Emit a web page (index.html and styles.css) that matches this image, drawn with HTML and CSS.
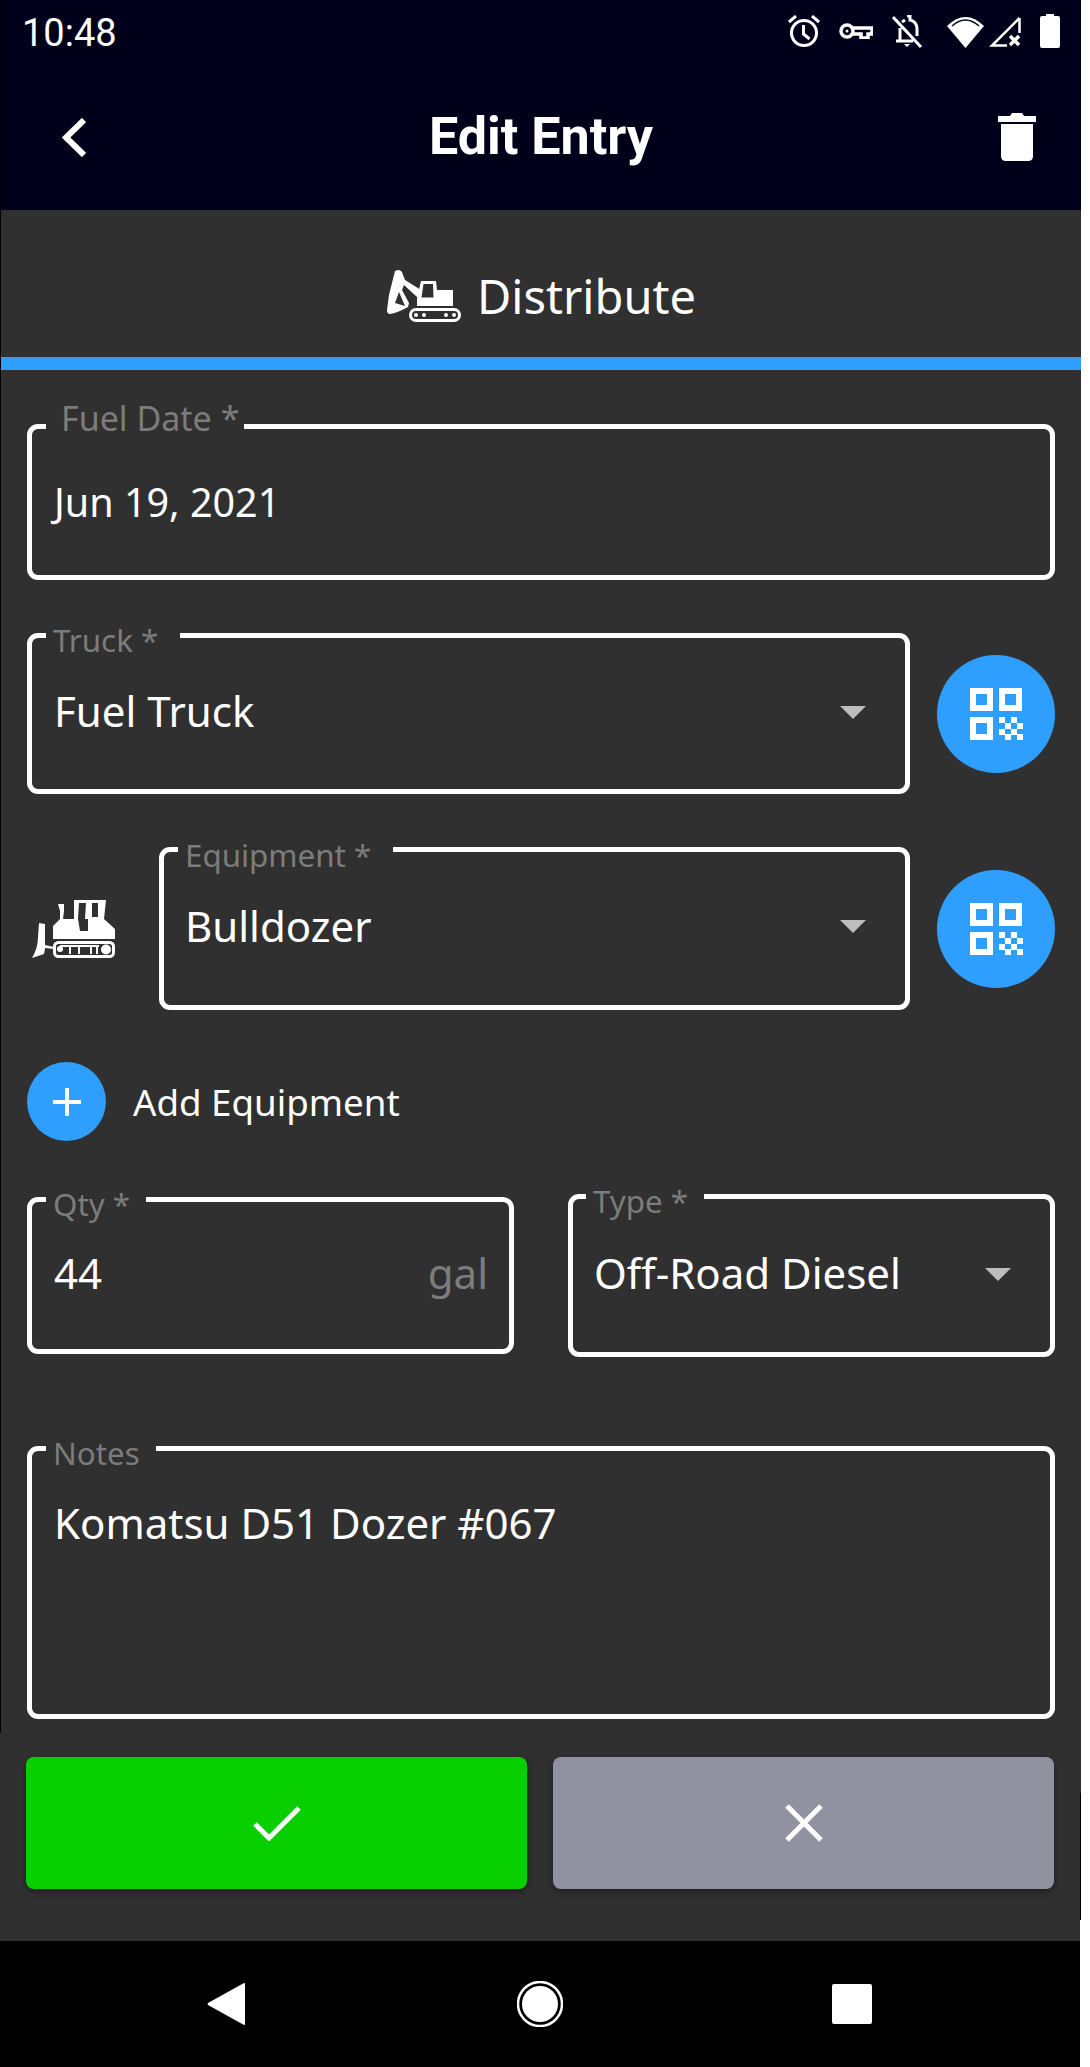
FILE: index.html
```html
<!DOCTYPE html>
<html lang="en">
<head>
<meta charset="utf-8">
<title>Edit Entry</title>
<link rel="stylesheet" href="styles.css">
</head>
<body>
<div class="upper">
  <header class="topbar">
    <div class="status">
      <span class="time">10:48</span>
      <div class="status-icons">
        <svg class="si" width="32" height="32" viewBox="0 0 32 32" fill="none" stroke="#fff" stroke-width="3"><circle cx="16" cy="18" r="12.500"/><path d="M15.500 10v9l6 5M1 7l7-6M31 7l-7-6"/></svg>
        <svg class="si" width="34" height="16" viewBox="0 0 34 16" fill="none" stroke="#fff" stroke-width="3.500"><circle cx="8" cy="8" r="6"/><circle cx="8" cy="8" r="1.500" fill="#fff" stroke="none"/><path d="M14 5h19v6h-4v4h-7v-4h-8"/></svg>
        <svg class="si" width="31" height="33" viewBox="0 0 31 33" fill="none" stroke="#fff" stroke-width="3"><path d="M4 26h17M8 26V13M25 21v-8a9 9 0 0 0-7-8V1h-3M13 5l-3 2M1 2l28 30"/><path d="M12 29h6l-3 3z" fill="#fff" stroke="none"/></svg>
        <svg class="si si-wifi" width="37" height="33" viewBox="0 0 37 33"><path d="M18.500 33 0 11Q18.500-7 37 11Z" fill="#fff"/><path d="M5 11Q18.500-1 32 11" fill="none" stroke="#00001a" stroke-width="1.500"/></svg>
        <svg class="si si-signal" width="32" height="32" viewBox="0 0 32 32" fill="none" stroke="#fff" stroke-width="2.500"><path d="M30.500 3v15M30.500 3 3 30.500h15"/><path d="M21 21l9 9M30 21l-9 9" stroke-width="3.500"/></svg>
        <svg class="si" width="20" height="34" viewBox="0 0 20 34"><path d="M6 2V0h8v2h4q2 0 2 2v28q0 2-2 2H2q-2 0-2-2V4q0-2 2-2z" fill="#fff"/></svg>
      </div>
    </div>
    <div class="titlebar">
      <svg class="back" width="24" height="39" viewBox="0 0 24 39" fill="none" stroke="#fff" stroke-width="6"><path d="M22 2 4 19.500 22 37"/></svg>
      <h1 class="title">Edit Entry</h1>
      <svg class="trash" width="38" height="48" viewBox="0 0 38 48"><path d="M0 3h12l2-3h10l2 3h12v6H0zM3 11h32v32q0 5-5 5H8q-5 0-5-5z" fill="#fff"/></svg>
    </div>
  </header>

  <div class="tab">
    <svg class="excavator" width="74" height="52" viewBox="0 0 74 52" fill="#fff">
      <path fill-rule="evenodd" d="M8 1l3-1q4 0 5 5l2 5 16 10-4 7-13-12-2 5 7 13-1 4Q10 43 3 44q-3 0-3-4l2-15zM12 22 8 33l10 3z"/>
      <path d="M34 11h15l1 9h16v16H30v-8z"/>
      <path d="M36.500 14H46l.5 13.500H34.500z" fill="#303030"/>
      <rect x="23.500" y="39.500" width="49" height="11" rx="5.500" fill="none" stroke="#fff" stroke-width="3"/>
      <circle cx="29" cy="45" r="2"/><circle cx="37" cy="45" r="2"/><circle cx="59" cy="45" r="2"/><circle cx="67" cy="45" r="2"/>
    </svg>
    <span class="tab-label">Distribute</span>
  </div>

  <form class="form">
    <div class="field field-date">
      <span class="legend legend-date">Fuel Date *</span>
      <span class="value value-date">Jun 19, 2021</span>
    </div>

    <div class="row row-truck">
      <div class="field field-select">
        <span class="legend legend-truck">Truck *</span>
        <span class="value">Fuel Truck</span>
        <span class="caret"></span>
      </div>
      <button class="qr" type="button" aria-label="Scan">
        <svg width="53" height="52" viewBox="0 0 53 52"><use href="#qr-code"/></svg>
      </button>
    </div>

    <div class="row row-equip">
      <svg class="dozer" width="83" height="60" viewBox="0 0 83 60" fill="#fff">
        <path d="M7 24l6 1v21l9 2v2l-9-1v1L12 55 0 59q6-10 6-21z"/>
        <path fill-rule="evenodd" d="M26 5h6v7l-1 8h11V1h32l-2 19 11 10v10H21V27l7-7 0-8zM47 4 46 20l2 12h8V20h-3l1-16zM60 4v14h6V4z"/>
        <rect x="22.500" y="43.500" width="59" height="14" rx="4" fill="#303030" stroke="#fff" stroke-width="3"/>
        <circle cx="28" cy="50" r="3"/><circle cx="74" cy="50.500" r="5"/>
        <path d="M28 46h39v2H28zM37 47h2v8h-2zM46 47h2v8h-2zM58 47h2v8h-2zM64 47h2v8h-2z"/>
      </svg>
      <div class="field field-select field-equip">
        <span class="legend legend-equip">Equipment *</span>
        <span class="value">Bulldozer</span>
        <span class="caret"></span>
      </div>
      <button class="qr" type="button" aria-label="Scan">
        <svg width="53" height="52" viewBox="0 0 53 52"><use href="#qr-code"/></svg>
      </button>
    </div>

    <div class="add-row">
      <button class="add" type="button" aria-label="Add">
        <svg width="30" height="30" viewBox="0 0 30 30"><path d="M13 1h4v12h12v4H17v12h-4V17H1v-4h12z" fill="#fff"/></svg>
      </button>
      <span class="add-label">Add Equipment</span>
    </div>

    <div class="pair">
      <div class="field field-qty">
        <span class="legend legend-qty">Qty *</span>
        <span class="value">44</span>
        <span class="unit">gal</span>
      </div>
      <div class="field field-type">
        <span class="legend legend-type">Type *</span>
        <span class="value">Off-Road Diesel</span>
        <span class="caret caret-type"></span>
      </div>
    </div>

    <div class="field field-notes">
      <span class="legend legend-notes">Notes</span>
      <span class="value">Komatsu D51 Dozer #067</span>
    </div>
  </form>
</div>

<div class="actions">
  <button class="action ok" type="button" aria-label="Save">
    <svg width="48" height="36" viewBox="0 0 48 36" fill="none" stroke="#fff" stroke-width="5"><path d="M2 19 16 33 46 3"/></svg>
  </button>
  <button class="action cancel" type="button" aria-label="Cancel">
    <svg width="38" height="38" viewBox="0 0 38 38" fill="none" stroke="#fff" stroke-width="5"><path d="M2 2l34 34M36 2 2 36"/></svg>
  </button>
</div>

<nav class="navbar">
  <svg class="nav-back" width="38" height="42" viewBox="0 0 38 42"><path d="M38 1v40q0 1-1 1L1 22q-1-1 0-2L37 0q1 0 1 1z" fill="#fff"/></svg>
  <svg class="nav-home" width="46" height="46" viewBox="0 0 46 46"><circle cx="23" cy="23" r="22" fill="none" stroke="#fff" stroke-width="2.500"/><circle cx="23" cy="23" r="18" fill="#fff"/></svg>
  <svg class="nav-recent" width="40" height="40" viewBox="0 0 40 40"><rect width="40" height="40" rx="2" fill="#fff"/></svg>
</nav>

<svg class="defs" width="0" height="0" aria-hidden="true">
  <defs>
    <g id="qr-code" fill="#fff">
      <path fill-rule="evenodd" d="M0 0h23v23H0zM6 6v11h11V6zM29 0h23v23H29zM35 6v11h11V6zM0 29h23v23H0zM6 35v11h11V35z"/>
      <path d="M29 29h6v6h-6zM41 29h6v6h-6zM35 35h6v6h-6zM47 35h6v6h-6zM29 41h6v6h-6zM41 41h6v6h-6zM35 46h6v6h-6zM47 46h6v6h-6z"/>
    </g>
  </defs>
</svg>
</body>
</html>
```
FILE: styles.css
```css
* { box-sizing: border-box; }
html, body { margin: 0; padding: 0; background: #fff; }
body { width: 1090px; height: 2067px; overflow: hidden; font-family: "Noto Sans", sans-serif; color: #fff; }
.defs { display: block; height: 0; }

.upper { width: 1081px; height: 1733px; background: #303030; border-left: 1px solid #000; display: flex; flex-direction: column; }

.topbar { height: 210px; background: #00001a; flex: none; }
.status { height: 66px; display: flex; justify-content: space-between; align-items: flex-start; padding: 13px 21px 0 21px; }
.time { font-family: Roboto, sans-serif; font-size: 38px; line-height: 41px; }
.status-icons { display: flex; align-items: center; gap: 19px; height: 36px; }
.si { display: block; flex: none; }
.si-wifi { margin-left: 5px; }
.si-signal { margin-left: -14px; }
.titlebar { height: 144px; display: grid; grid-template-columns: 1fr auto 1fr; align-items: center; padding: 0 45px 2px 45px; }
.back { margin-left: 16px; }
.title { font-family: Roboto, sans-serif; font-weight: 700; font-size: 52px; line-height: 60px; margin: 0; }
.trash { justify-self: end; }

.tab { height: 160px; flex: none; display: flex; align-items: center; justify-content: center; gap: 16px; border-bottom: 13px solid #2f9fff; padding: 25px 0 0 1px; }
.tab-label { font-size: 47px; line-height: 60px; }

.form { display: flex; flex-direction: column; padding: 54px 26px 0 26px; flex: 1; min-height: 0; }
.field { border: 5px solid #fff; border-radius: 11px; position: relative; display: flex; align-items: center; padding: 0 21px 0 22px; flex: none; }
.legend { position: absolute; top: -18px; left: 14px; background: #303030; color: #7c7c7c; font-size: 31.300px; line-height: 40px; padding: 0 16px 0 7px; white-space: nowrap; }
.value { font-size: 42px; line-height: 54px; white-space: nowrap; }

.field-date { height: 156px; margin-bottom: 53px; padding: 0 20px 0 22px; }
.value-date { font-size: 39.500px; }
.legend-date { left: 14px; top: -31px; padding: 0 5px 0 15px; font-size: 34px; }
.legend-truck, .legend-equip { padding-right: 22px; }
.legend-equip { top: -17px; }
.legend-type { left: 13px; }

.row { display: flex; align-items: center; }
.row-truck { margin-bottom: 53px; height: 161px; }
.row-equip { margin-bottom: 52px; height: 163px; }
.field-select { width: 883px; height: 100%; padding-bottom: 6px; }
.field-equip { width: 751px; padding-left: 21px; }
.caret { position: absolute; right: 39px; top: 68px; width: 0; height: 0; border-left: 13px solid transparent; border-right: 13px solid transparent; border-top: 13px solid #bdbdbd; }
.caret-type { top: 69px; }
.qr { width: 118px; height: 118px; border-radius: 50%; border: 0; background: #2f9fff; margin-left: 27px; padding: 0; display: flex; align-items: center; justify-content: center; flex: none; }
.dozer { display: block; flex: none; margin-left: 5px; margin-right: 44px; }

.add-row { display: flex; align-items: center; height: 79px; margin-bottom: 53px; }
.add { width: 79px; height: 79px; border-radius: 50%; border: 0; background: #2f9fff; padding: 0; display: flex; align-items: center; justify-content: center; flex: none; }
.add-label { font-size: 36.700px; line-height: 50px; margin-left: 27px; }

.pair { display: flex; justify-content: space-between; align-items: center; height: 163px; margin-bottom: 89px; }
.field-qty { width: 487px; height: 157px; justify-content: space-between; padding-bottom: 6px; }
.field-type { width: 487px; height: 163px; padding-bottom: 6px; padding-left: 21px; }
.unit { color: #7c7c7c; font-size: 42px; line-height: 54px; }

.field-notes { height: 273px; align-items: flex-start; padding-top: 45px; }

.actions { width: 1080px; height: 208px; background: #303030; display: flex; gap: 26px; padding: 24px 26px 0 26px; position: relative; }
.actions::after { content: ""; position: absolute; left: 1080px; top: 0; width: 1px; height: 187px; background: linear-gradient(#303030 60px, #000 60px); }
.action { width: 501px; height: 132px; border: 0; border-radius: 8px; padding: 0; display: flex; align-items: center; justify-content: center; box-shadow: 0 3px 6px rgba(0,0,0,.35); }
.ok { background: #08d000; }
.cancel { background: #9092a2; }

.navbar { width: 1080px; height: 126px; background: #000; display: flex; align-items: center; padding-left: 207px; }
.navbar svg { display: block; flex: none; }
.nav-home { margin-left: 272px; }
.nav-recent { margin-left: 269px; }
```
